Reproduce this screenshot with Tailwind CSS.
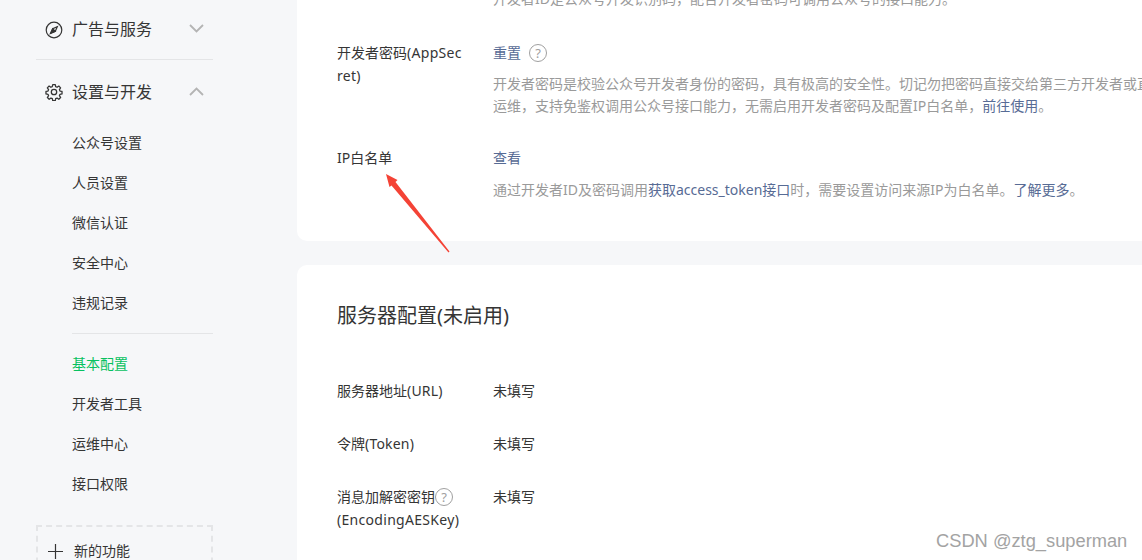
<!DOCTYPE html>
<html lang="zh-CN">
<head>
    <meta charset="UTF-8">
    <meta name="viewport" content="width=device-width, initial-scale=1.0">
    <title>基本配置</title>
    <script src="https://cdn.jsdelivr.net/npm/@tailwindcss/browser@4"></script>
</head>
<body class="relative h-[560px] overflow-hidden bg-[#f6f7f9] font-['Noto_Sans','Noto_Sans_CJK_SC',sans-serif] text-[14px] text-[#353535]">
    <div class="flex h-[560px] overflow-hidden">
        <!-- Sidebar -->
        <aside class="w-[297px] shrink-0">
            <div class="ml-[36px] w-[177px]">
                <div class="flex h-[60px] items-center border-b border-[#e4e5e7] pl-[9px] pr-[9px] text-[16px]">
                    <svg class="h-[18px] w-[18px]" viewBox="0 0 18 18" fill="none" stroke="#353535" stroke-width="1.2"><circle cx="9" cy="9" r="7.8"/><path d="M12.4 5.6 10.3 10.3 5.6 12.4 7.7 7.7Z"/><path d="M7.7 7.7 10.3 10.3 5.6 12.4Z" fill="#353535"/></svg>
                    <span class="ml-[9px] flex-1 pb-[2px]">广告与服务</span>
                    <svg class="mb-[2px] h-[9px] w-[15px]" viewBox="0 0 15 9" fill="none" stroke="#b4b4b4" stroke-width="1.8"><path d="M1 1 7.5 7.5 14 1"/></svg>
                </div>
                <div class="flex h-[63px] items-center pl-[9px] pr-[9px] text-[16px]">
                    <svg class="h-[18px] w-[18px]" viewBox="0 0 24 24" fill="none" stroke="#353535" stroke-width="1.7" stroke-linejoin="round"><circle cx="12" cy="12" r="3.6"/><path d="M10.3 2.2h3.4l.5 2.7 1.9.8 2.3-1.6 2.4 2.4-1.6 2.3.8 1.9 2.7.5v3.4l-2.7.5-.8 1.9 1.6 2.3-2.4 2.4-2.3-1.6-1.9.8-.5 2.7h-3.4l-.5-2.7-1.9-.8-2.3 1.6-2.4-2.4 1.6-2.3-.8-1.9-2.7-.5v-3.4l2.7-.5.8-1.9L3.1 6.5l2.4-2.4 2.3 1.6 1.9-.8Z"/></svg>
                    <span class="ml-[9px] flex-1">设置与开发</span>
                    <svg class="h-[9px] w-[15px]" viewBox="0 0 15 9" fill="none" stroke="#b4b4b4" stroke-width="1.8"><path d="M1 8 7.5 1.5 14 8"/></svg>
                </div>
                <div class="ml-[36px] border-b border-[#e4e5e7] pb-[10px]">
                    <div class="flex h-[40px] items-center pb-[2px]">公众号设置</div>
                    <div class="flex h-[40px] items-center pb-[2px]">人员设置</div>
                    <div class="flex h-[40px] items-center pb-[2px]">微信认证</div>
                    <div class="flex h-[40px] items-center pb-[2px]">安全中心</div>
                    <div class="flex h-[40px] items-center pb-[2px]">违规记录</div>
                </div>
                <div class="mt-[10px] ml-[36px]">
                    <div class="flex h-[40px] items-center pb-[2px] text-[#07c160]">基本配置</div>
                    <div class="flex h-[40px] items-center pb-[2px]">开发者工具</div>
                    <div class="flex h-[40px] items-center pb-[2px]">运维中心</div>
                    <div class="flex h-[40px] items-center pb-[2px]">接口权限</div>
                </div>
                <div class="mt-[21px] flex h-[60px] items-start border-2 border-dashed border-[#e4e5e7] pt-[13px] pl-[10px]">
                    <svg class="mt-[4px] h-[15px] w-[15px]" viewBox="0 0 15 15" stroke="#353535" stroke-width="1.2"><path d="M7.5 0v15M0 7.5h15"/></svg>
                    <span class="ml-[11px]">新的功能</span>
                </div>
            </div>
        </aside>

        <!-- Main -->
        <main class="min-w-0 flex-1 overflow-hidden leading-[22px]">
            <section class="-mt-[12px] h-[253px] rounded-bl-[10px] bg-white pl-[40px]">
                <p class="ml-[156px] whitespace-nowrap text-[#9a9a9a]">开发者ID是公众号开发识别码，配合开发者密码可调用公众号的接口能力。</p>
                <div class="mt-[32px] flex">
                    <div class="w-[127px] shrink-0 break-all leading-[22.5px]">开发者密码<span class="tracking-[0.3px]">(AppSecret)</span></div>
                    <div class="ml-[29px] min-w-0">
                        <div class="flex items-center">
                            <a class="text-[#576b95]">重置</a>
                            <span class="ml-[8px] flex h-[18px] w-[18px] items-center justify-center rounded-full border border-[#a0a0a0] text-[13px] text-[#a0a0a0]">?</span>
                        </div>
                        <p class="mt-[9px] whitespace-nowrap text-[#9a9a9a]">开发者密码是校验公众号开发者身份的密码，具有极高的安全性。切记勿把密码直接交给第三方开发者或直接存储在代码中。</p>
                        <p class="whitespace-nowrap text-[#9a9a9a]">运维，支持免鉴权调用公众号接口能力，无需启用开发者密码及配置IP白名单，<a class="text-[#576b95]">前往使用</a>。</p>
                    </div>
                </div>
                <div class="mt-[30px] flex">
                    <div class="w-[127px] shrink-0">IP白名单</div>
                    <div class="ml-[29px] min-w-0">
                        <a class="text-[#576b95]">查看</a>
                        <p class="mt-[10px] whitespace-nowrap text-[#9a9a9a]">通过开发者ID及密码调用<a class="text-[#576b95]">获取access_token接口</a>时，需要设置访问来源IP为白名单。<a class="text-[#576b95]">了解更多</a>。</p>
                    </div>
                </div>
            </section>
            <section class="mt-[24px] h-[320px] rounded-tl-[10px] bg-white pl-[40px]">
                <h2 class="pt-[36px] text-[20px] leading-[30px]">服务器配置(未启用)</h2>
                <div class="mt-[49px] flex">
                    <div class="w-[127px] shrink-0">服务器地址<span class="tracking-[0.2px]">(URL)</span></div>
                    <div class="ml-[29px]">未填写</div>
                </div>
                <div class="mt-[31px] flex">
                    <div class="w-[127px] shrink-0">令牌<span class="tracking-[0.2px]">(Token)</span></div>
                    <div class="ml-[29px]">未填写</div>
                </div>
                <div class="mt-[31px] flex">
                    <div class="w-[127px] shrink-0 leading-[22.5px]">
                        <div class="flex items-center whitespace-nowrap">消息加解密密钥<span class="flex h-[18px] w-[18px] items-center justify-center rounded-full border border-[#a0a0a0] text-[13px] text-[#a0a0a0]">?</span></div>
                        <div class="tracking-[0.3px]">(EncodingAESKey)</div>
                    </div>
                    <div class="ml-[29px]">未填写</div>
                </div>
            </section>
        </main>
    </div>

    <!-- Annotation arrow pasted over the screenshot -->
    <svg class="absolute left-0 top-0 h-[560px] w-[1142px]" viewBox="0 0 1142 560"><path d="M386 174 397.5 180 395.5 182 449.5 251.5 448.5 252.5 391.5 185.5 389.5 187Z" fill="#f44336"/></svg>
    <div class="absolute left-[936px] top-[529px] font-['Liberation_Sans',sans-serif] text-[18.3px] leading-[24px] text-[#a3a3a3]">CSDN @ztg_superman</div>
</body>
</html>
